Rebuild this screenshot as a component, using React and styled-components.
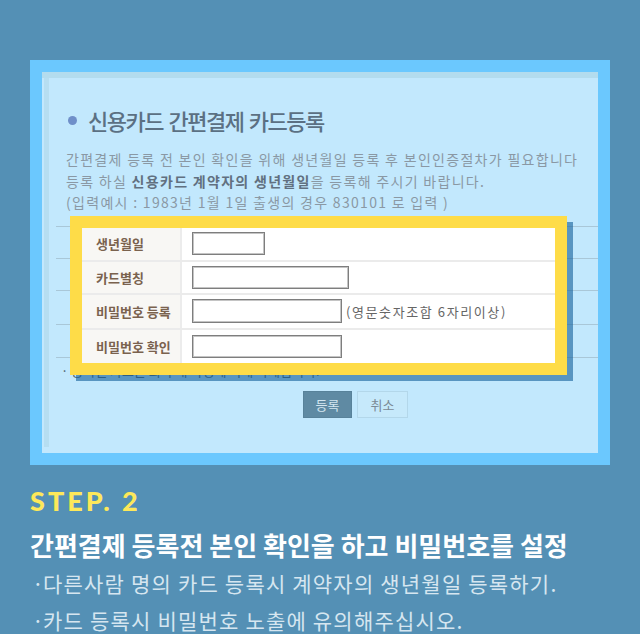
import React from "react";
import styled, { createGlobalStyle } from "styled-components";

const Global = createGlobalStyle`
  html, body { margin: 0; padding: 0; background: #5490b5; }
  body { font-family: "Noto Sans CJK KR", "Noto Sans", sans-serif; }
  * { box-sizing: border-box; }
`;

const Page = styled.div`
  width: 640px;
  height: 634px;
  overflow: hidden;
  background: #5490b5;
  padding-top: 60px;
`;

const Frame = styled.div`
  margin: 0 30px;
  height: 405px;
  background: #6bc8fe;
  padding: 12px 12px 12px 12px;
`;

const Panel = styled.div`
  height: 381px;
  background: #c2e8fd;
  border-top: 6px solid #b3dcee;
  display: flex;
  align-items: flex-start;
`;

const Strip = styled.div`
  width: 5px;
  margin-left: 2px;
  height: 369px;
  background: #b6def1;
  flex: none;
`;

const Content = styled.div`
  flex: 1;
  display: flex;
  flex-direction: column;
`;

const TitleRow = styled.div`
  margin-top: 27px;
  height: 30px;
  display: flex;
  align-items: center;
  padding-left: 19px;
  gap: 11px;
`;

const Dot = styled.span`
  width: 9px;
  height: 9px;
  border-radius: 50%;
  background: #6f8fc9;
  flex: none;
`;

const Title = styled.h1`
  margin: 0;
  font-size: 22px;
  font-weight: 500;
  letter-spacing: -1.5px;
  word-spacing: 2px;
  color: #5b7083;
  line-height: 30px;
  white-space: nowrap;
`;

const Desc = styled.div`
  margin-top: 14px;
  padding-left: 17px;
  font-size: 14px;
  line-height: 21.5px;
  color: #8a98a4;
  letter-spacing: 1.3px;
  white-space: nowrap;
`;

const Strong = styled.b`
  font-weight: 700;
  color: #617080;
`;

const TableArea = styled.div`
  position: relative;
  margin-top: 12px;
  margin-left: 7px;
`;

const BgRow = styled.div`
  height: ${(p) => p.$h}px;
  border-bottom: 1px solid #a9c7d8;
  ${(p) => (p.$first ? "border-top: 1px solid #a9c7d8;" : "")}
`;

const Note = styled.div`
  height: 20px;
  line-height: 20px;
  margin-top: 3px;
  font-size: 13px;
  color: #4c5b68;
  padding-left: 5px;
  white-space: nowrap;
`;

const Overlay = styled.div`
  position: absolute;
  left: 14px;
  top: -10px;
  width: 497px;
  height: 159px;
  border: 12px solid #fedc48;
  background: #ffffff;
  box-shadow: 6px 6px 0 rgba(22, 99, 157, 0.62);
  display: flex;
  flex-direction: column;
`;

const FormRow = styled.div`
  height: ${(p) => p.$h}px;
  display: flex;
  border-bottom: ${(p) => (p.$last ? "none" : "2px solid #ebebeb")};
`;

const Label = styled.div`
  width: 100px;
  flex: none;
  background: #f8f7f4;
  border-right: 2px solid #ececec;
  display: flex;
  align-items: center;
  padding-left: 14px;
  font-size: 13px;
  font-weight: 700;
  color: #7a624e;
  white-space: nowrap;
`;

const Field = styled.div`
  flex: 1;
  display: flex;
  align-items: center;
  padding-left: 10px;
  gap: 4px;
`;

const Input = styled.div`
  width: ${(p) => p.$w}px;
  height: ${(p) => p.$ht}px;
  border: 1px solid #7e7e7e;
  box-shadow: inset 0 0 0 1px #c4c4c4;
  background: #fff;
`;

const Hint = styled.span`
  font-size: 13px;
  color: #666;
  letter-spacing: 1.6px;
  white-space: nowrap;
`;

const Buttons = styled.div`
  margin-top: 10px;
  padding-left: 254px;
  display: flex;
  gap: 5px;
`;

const Button = styled.div`
  height: 27px;
  width: ${(p) => p.$w}px;
  display: flex;
  align-items: center;
  justify-content: center;
  font-size: 13px;
  background: ${(p) => (p.$primary ? "#5f8aa3" : "#c6e9fb")};
  color: ${(p) => (p.$primary ? "#d4e6f0" : "#7b8a95")};
  border: 1px solid ${(p) => (p.$primary ? "#58829a" : "#b3d7ea")};
`;

const Bottom = styled.div`
  padding: 21px 30px 0;
`;

const Step = styled.div`
  font-family: Lato, "Noto Sans", sans-serif;
  font-weight: 900;
  font-size: 27px;
  line-height: 30px;
  letter-spacing: 3px;
  color: #fde85a;
`;

const Heading = styled.div`
  margin-top: 12px;
  font-size: 26px;
  line-height: 34px;
  font-weight: 700;
  letter-spacing: 0px;
  color: #ffffff;
  white-space: nowrap;
`;

const List = styled.ul`
  list-style: none;
  margin: 3px 0 0;
  padding: 0;
`;

const Item = styled.li`
  font-size: 21px;
  line-height: 37px;
  color: #d6e6f0;
  letter-spacing: 1.2px;
  white-space: nowrap;
  &::before {
    content: "·";
    display: inline-block;
    width: 11px;
    margin-left: 2px;
  }
`;

const rows = [
  { label: "생년월일", w: 73, h: 23, rh: 34 },
  { label: "카드별칭", w: 157, h: 23, rh: 33 },
  { label: "비밀번호 등록", w: 150, h: 24, rh: 35, hint: "(영문숫자조합 6자리이상)" },
  { label: "비밀번호 확인", w: 150, h: 23, rh: 33, last: true },
];

export default function App() {
  return (
    <Page>
      <Global />
      <Frame>
        <Panel>
          <Strip />
          <Content>
            <TitleRow>
              <Dot />
              <Title>신용카드 간편결제 카드등록</Title>
            </TitleRow>
            <Desc>
              <div>간편결제 등록 전 본인 확인을 위해 생년월일 등록 후 본인인증절차가 필요합니다</div>
              <div>
                등록 하실 <Strong>신용카드 계약자의 생년월일</Strong>을 등록해 주시기 바랍니다.
              </div>
              <div>(입력예시 : 1983년 1월 1일 출생의 경우 830101 로 입력 )</div>
            </Desc>
            <TableArea>
              <BgRow $first $h={33} />
              <BgRow $h={32} />
              <BgRow $h={34} />
              <BgRow $h={33} />
              <Note>· 등록된 카드는 회사 내 사정에 의해 삭제됩니다.</Note>
              <Overlay>
                {rows.map((r) => (
                  <FormRow key={r.label} $h={r.rh} $last={r.last}>
                    <Label>{r.label}</Label>
                    <Field>
                      <Input $w={r.w} $ht={r.h} />
                      {r.hint && <Hint>{r.hint}</Hint>}
                    </Field>
                  </FormRow>
                ))}
              </Overlay>
            </TableArea>
            <Buttons>
              <Button $primary $w={49}>등록</Button>
              <Button $w={51}>취소</Button>
            </Buttons>
          </Content>
        </Panel>
      </Frame>
      <Bottom>
        <Step>STEP. 2</Step>
        <Heading>간편결제 등록전 본인 확인을 하고 비밀번호를 설정</Heading>
        <List>
          <Item>다른사람 명의 카드 등록시 계약자의 생년월일 등록하기.</Item>
          <Item>카드 등록시 비밀번호 노출에 유의해주십시오.</Item>
        </List>
      </Bottom>
    </Page>
  );
}
